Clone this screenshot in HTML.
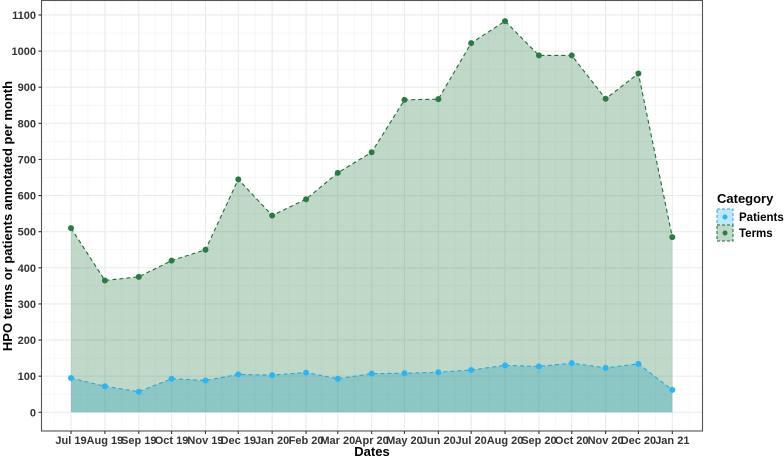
<!DOCTYPE html>
<html><head><meta charset="utf-8"><style>
html,body{margin:0;padding:0;background:#fff;width:784px;height:458px;overflow:hidden}
svg{display:block;font-family:"Liberation Sans",sans-serif}
</style></head><body>
<svg id="s" width="784" height="458" xmlns="http://www.w3.org/2000/svg"></svg>
<script>
var s=document.getElementById('s');
var days=[0,31,62,92,123,153,184,215,244,275,305,336,366,397,428,458,489,519,550];
var labs=["Jul 19","Aug 19","Sep 19","Oct 19","Nov 19","Dec 19","Jan 20","Feb 20","Mar 20","Apr 20","May 20","Jun 20","Jul 20","Aug 20","Sep 20","Oct 20","Nov 20","Dec 20","Jan 21"];
var T=[510,365,375,420,450,645,545,590,663,720,865,867,1022,1083,988,988,868,938,485];
var P=[95,72,57,93,88,105,103,110,93,107,108,111,117,130,127,136,123,134,62];
function X(d){return 71+1.0933*d}
function Y(v){return 412.3-v*0.3612}
var L=41.5,R=702.5,Tp=0.5,B=431;
var h='';
for(var v=-50;v<=1150;v+=100){var y=Y(v);if(y>Tp&&y<B)h+='<line x1="'+L+'" x2="'+R+'" y1="'+y+'" y2="'+y+'" stroke="#f2f2f2" stroke-width="0.6"/>';}
var xs=days.map(X);
var mids=[];for(var i=0;i<xs.length-1;i++)mids.push((xs[i]+xs[i+1])/2);
mids.unshift(xs[0]-16.7);mids.push(xs[18]+16.7);
mids.forEach(function(x){if(x>L&&x<R)h+='<line x1="'+x+'" x2="'+x+'" y1="'+Tp+'" y2="'+B+'" stroke="#f2f2f2" stroke-width="0.6"/>';});
for(var v=0;v<=1100;v+=100){var y=Y(v);h+='<line x1="'+L+'" x2="'+R+'" y1="'+y+'" y2="'+y+'" stroke="#ebebeb" stroke-width="1.1"/>';}
xs.forEach(function(x){h+='<line x1="'+x+'" x2="'+x+'" y1="'+Tp+'" y2="'+B+'" stroke="#ebebeb" stroke-width="1.1"/>';});
function area(vals,fill,op){var d='M'+xs[0]+','+Y(0);vals.forEach(function(v,i){d+=' L'+xs[i]+','+Y(v)});d+=' L'+xs[18]+','+Y(0)+'Z';return '<path d="'+d+'" fill="'+fill+'" fill-opacity="'+op+'"/>';}
function line(vals,c){var d='';vals.forEach(function(v,i){d+=(i?' L':'M')+xs[i]+','+Y(v)});return '<path d="'+d+'" fill="none" stroke="'+c+'" stroke-width="1.1" stroke-dasharray="4,3"/>';}
h+=area(T,'#2e7d46',0.3);
h+=area(P,'#189fc1',0.3);
h+=line(T,'#1f6a3a');h+=line(P,'#27a8e0');
T.forEach(function(v,i){h+='<circle cx="'+xs[i]+'" cy="'+Y(v)+'" r="3" fill="#2a7a45"/>'});
P.forEach(function(v,i){h+='<circle cx="'+xs[i]+'" cy="'+Y(v)+'" r="3" fill="#29b6f6"/>'});
h+='<rect x="'+L+'" y="'+Tp+'" width="'+(R-L)+'" height="'+(B-Tp)+'" fill="none" stroke="#555" stroke-width="1.1"/>';
for(var v=0;v<=1100;v+=100){var y=Y(v);h+='<line x1="38.5" x2="'+L+'" y1="'+y+'" y2="'+y+'" stroke="#333" stroke-width="1.1"/><text x="36" y="'+(y+4)+'" text-anchor="end" font-size="11" font-weight="bold" fill="#333">'+v+'</text>';}
xs.forEach(function(x,i){h+='<line x1="'+x+'" x2="'+x+'" y1="'+B+'" y2="'+(B+3)+'" stroke="#333" stroke-width="1.1"/><text x="'+x+'" y="444" text-anchor="middle" font-size="11" font-weight="bold" fill="#333">'+labs[i]+'</text>';});
h+='<text x="372" y="456" text-anchor="middle" font-size="13" font-weight="bold" fill="#000">Dates</text>';
h+='<text transform="translate(12,216) rotate(-90)" text-anchor="middle" font-size="13" font-weight="bold" fill="#000">HPO terms or patients annotated per month</text>';
h+='<text x="717" y="203" font-size="13" font-weight="bold" fill="#000">Category</text>';
h+='<rect x="717" y="209" width="16" height="16" fill="#29b6f6" fill-opacity="0.3" stroke="#27a8e0" stroke-dasharray="3,2"/><circle cx="725" cy="217" r="2.5" fill="#29b6f6"/>';
h+='<rect x="717" y="225" width="16" height="16" fill="#2e7d46" fill-opacity="0.3" stroke="#1f6a3a" stroke-dasharray="3,2"/><circle cx="725" cy="233" r="2.5" fill="#2a7a45"/>';
h+='<text x="739" y="221" font-size="11.5" font-weight="bold" fill="#000">Patients</text>';
h+='<text x="739" y="237" font-size="11.5" font-weight="bold" fill="#000">Terms</text>';
s.innerHTML=h;
</script>
</body></html>
